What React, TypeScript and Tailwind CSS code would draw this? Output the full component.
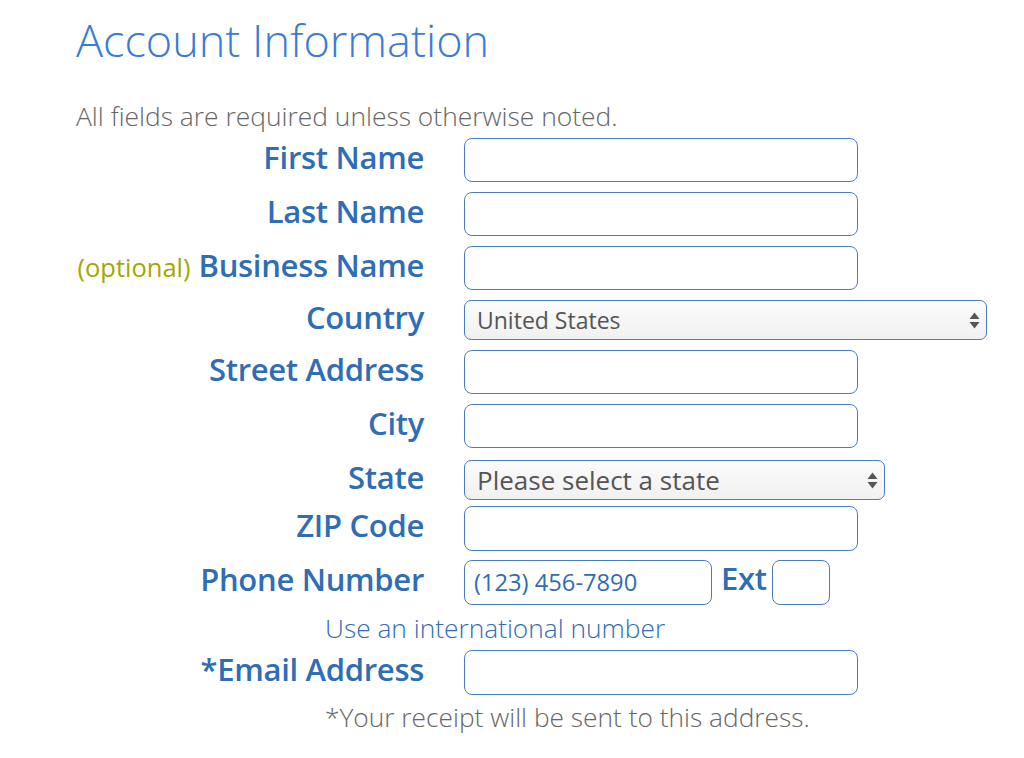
const Arrows = () => (
  <svg width="11" height="17" viewBox="0 0 11 17" className="shrink-0">
    <path d="M5.5 0.5 L10.5 7 H0.5 Z" fill="#555" />
    <path d="M5.5 16.5 L10.5 10 H0.5 Z" fill="#555" />
  </svg>
)

const Row = ({ label, children, pre, className = '' }: { label: string; children: React.ReactNode; pre?: string; className?: string }) => (
  <div className={`flex items-center ${className}`}>
    <div className="w-[348px] shrink-0 whitespace-nowrap text-right text-[31px] font-semibold leading-none tracking-[-0.3px] text-[#2f6db5] -mt-[6px]">
      {pre && <span className="mr-[8px] text-[25.5px] font-normal tracking-normal text-[#a2a800]">{pre}</span>}
      {label}
    </div>
    <div className="ml-[40px] flex items-center">{children}</div>
  </div>
)

const Field = ({ w = 'w-[394px] h-[44px]' }: { w?: string }) => (
  <div className={`${w} rounded-[8px] border-[1.5px] border-[#4a7dbf] bg-white`} />
)

export default function App() {
  return (
    <div className="min-h-[758px] w-[1024px] bg-white pl-[76px] font-['Open_Sans',sans-serif]">
      <h1 className="pt-[12px] text-[45px] font-light leading-[56px] text-[#3a7bd5]">Account Information</h1>
      <p className="mt-[32px] text-[26.4px] font-light leading-[32px] text-[#666]">
        All fields are required unless otherwise noted.
      </p>

      <div className="mt-[6px] flex flex-col">
        <Row label="First Name">
          <Field />
        </Row>
        <Row label="Last Name" className="mt-[10px]">
          <Field />
        </Row>
        <Row label="Business Name" pre="(optional)" className="mt-[10px]">
          <Field />
        </Row>
        <Row label="Country" className="mt-[10px]">
          <div className="flex h-[40px] w-[523px] items-center justify-between rounded-[7px] border-[1.5px] border-[#4a7dbf] bg-gradient-to-b from-[#fbfbfb] to-[#f1f1f1] pl-[12px] pr-[6px] text-[23px] text-[#555]">
            United States
            <Arrows />
          </div>
        </Row>
        <Row label="Street Address" className="mt-[10px]">
          <Field />
        </Row>
        <Row label="City" className="mt-[10px]">
          <Field />
        </Row>
        <Row label="State" className="mt-[12px]">
          <div className="flex h-[40px] w-[421px] items-center justify-between rounded-[7px] border-[1.5px] border-[#4a7dbf] bg-gradient-to-b from-[#fbfbfb] to-[#f1f1f1] pl-[12px] pr-[6px] text-[26px] text-[#555]">
            Please select a state
            <Arrows />
          </div>
        </Row>
        <Row label="ZIP Code" className="mt-[6px]">
          <Field w="w-[394px] h-[45px]" />
        </Row>
        <Row label="Phone Number" className="mt-[9px]">
          <div className="flex h-[45px] w-[248px] items-center rounded-[8px] border-[1.5px] border-[#4a7dbf] bg-white pl-[9px] text-[23.7px] text-[#2f6db5]">
            (123) 456-7890
          </div>
          <span className="ml-[9px] -mt-[8px] text-[31px] font-semibold leading-none tracking-[-0.3px] text-[#2f6db5]">Ext</span>
          <div className="ml-[5px] h-[45px] w-[58px] rounded-[8px] border-[1.5px] border-[#4a7dbf] bg-white" />
        </Row>
        <p className="ml-[249px] mt-[7px] text-[26.3px] font-light leading-[32px] text-[#2f6db5]">Use an international number</p>
        <Row label="*Email Address" className="mt-[6px]">
          <Field w="w-[394px] h-[45px]" />
        </Row>
        <p className="ml-[249px] mt-[6px] text-[26.3px] font-light leading-[32px] text-[#666]">
          *Your receipt will be sent to this address.
        </p>
      </div>
    </div>
  )
}
